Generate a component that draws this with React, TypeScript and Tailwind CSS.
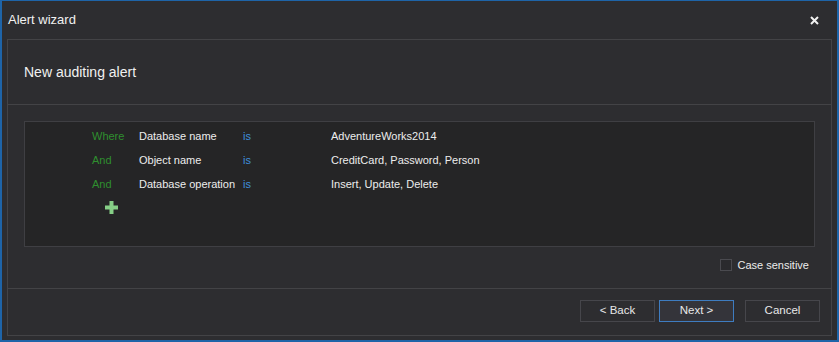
const rows = [
  { op: "Where", field: "Database name", value: "AdventureWorks2014" },
  { op: "And", field: "Object name", value: "CreditCard, Password, Person" },
  { op: "And", field: "Database operation", value: "Insert, Update, Delete" },
];

function Button({ label, active }: { label: string; active?: boolean }) {
  return (
    <button
      className={
        "flex items-center justify-center h-[22px] w-[75px] text-[11.5px] text-[#e8e8e8] border " +
        (active ? "border-[#3e7cc0] bg-[#34343a]" : "border-[#46464b] bg-[#2d2d30]")
      }
    >
      {label}
    </button>
  );
}

export default function App() {
  return (
    <div
      className="w-[839px] h-[342px] bg-[#2d2d30] border-t border-x-2 border-b-2 border-[#1e64a8] flex flex-col text-[#f0f0f0] whitespace-nowrap"
      style={{ fontFamily: '"Segoe UI", "Liberation Sans", sans-serif' }}
    >
      {/* title bar */}
      <div className="h-[38px] flex items-center justify-between pl-[6px] pr-[18px]">
        <span className="text-[13px] text-[#f1f1f1]">Alert wizard</span>
        <svg width="9" height="9" viewBox="0 0 9 9">
          <path d="M1 1L8 8M8 1L1 8" stroke="#f1f1f1" strokeWidth="2" />
        </svg>
      </div>

      <div className="mx-[5px] mb-[4px] flex-1 border border-[#434346] flex flex-col">
        <div className="h-[65px] flex items-center pl-[16px] border-b border-[#434346]">
          <span className="text-[14px] text-[#f1f1f1]">New auditing alert</span>
        </div>

        <div className="h-[184px] px-[16px] pt-[16px] border-b border-[#434346] flex flex-col">
          <div className="h-[126px] bg-[#252526] border border-[#3f3f43] pt-[2px] text-[11px]">
            {rows.map((r, i) => (
              <div key={i} className="h-[24px] flex items-center">
                <span className="ml-[67px] w-[47px] text-[#2f8f2f]">{r.op}</span>
                <span className="w-[104px] text-[#ededed]">{r.field}</span>
                <span className="w-[88px] text-[#3f8fdc]">is</span>
                <span className="text-[#ededed]">{r.value}</span>
              </div>
            ))}
            <div className="ml-[80px] mt-[5px] flex">
              <svg width="13" height="13" viewBox="0 0 13 13">
                <path d="M4.5 0h4v4.5H13v4H8.5V13h-4V8.5H0v-4h4.5z" fill="#86cf86" />
              </svg>
            </div>
          </div>
          <div className="mt-[10px] flex items-center justify-end pr-[6px]">
            <span className="w-[12px] h-[12px] border border-[#4a4a4f] bg-[#2a2a2d]" />
            <span className="ml-[5px] text-[11px] text-[#ececec]">Case sensitive</span>
          </div>
        </div>

        <div className="flex-1 flex justify-end items-start pt-[11px] pr-[11px]">
          <div className="flex gap-[4px]">
            <Button label="< Back" />
            <Button label="Next >" active />
          </div>
          <div className="ml-[11px] flex">
            <Button label="Cancel" />
          </div>
        </div>
      </div>
    </div>
  );
}
